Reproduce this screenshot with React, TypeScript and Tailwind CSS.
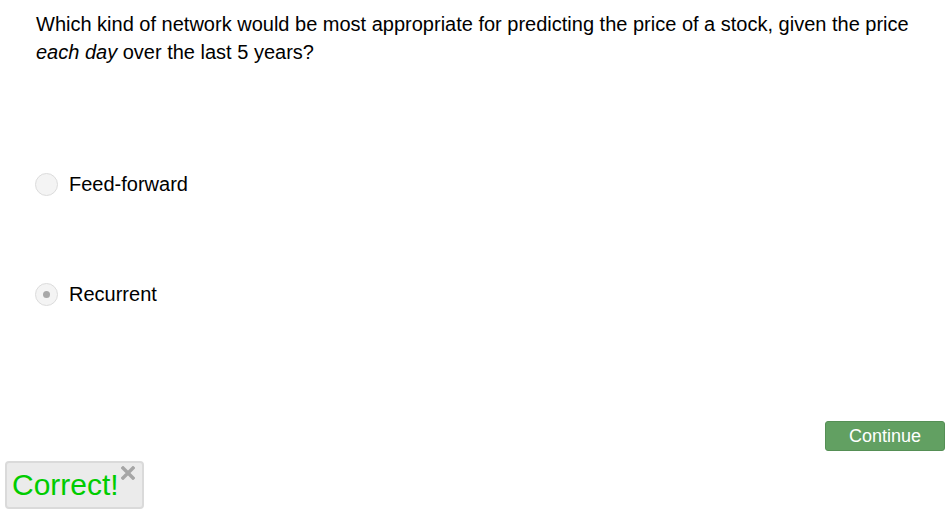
import React, { useState } from 'react';

const options = ['Feed-forward', 'Recurrent'];

export default function App() {
  const [selected, setSelected] = useState('Recurrent');
  const [showResult, setShowResult] = useState(true);

  return (
    <div
      className="relative w-[952px] h-[516px] bg-white text-black overflow-hidden"
      style={{ fontFamily: '"Liberation Sans", Arial, sans-serif' }}
    >
      <div className="pl-[36px] pr-[40px] pt-[10px]">
        <p className="text-[20px] leading-[28px]">
          Which kind of network would be most appropriate for predicting the price of a stock, given the price{' '}
          <em>each day</em> over the last 5 years?
        </p>

        <div className="mt-[107px] flex flex-col gap-[88px]">
          {options.map((opt) => (
            <label key={opt} className="flex items-center gap-[11px] cursor-pointer h-[22px]" onClick={() => setSelected(opt)}>
              <span className="w-[23px] h-[23px] -ml-[1px] rounded-full border border-[#dcdcdc] bg-[#f4f4f4] flex items-center justify-center">
                {selected === opt && <span className="w-[7px] h-[7px] rounded-full bg-[#a8a8a8]" />}
              </span>
              <span className="text-[20px] leading-[22px]">{opt}</span>
            </label>
          ))}
        </div>
      </div>

      <div className="flex justify-end pr-[7px] mt-[116px]">
        <button className="w-[120px] h-[30px] rounded-[3px] bg-[#62a062] border border-[#558f55] text-white text-[18px] leading-[28px]">
          Continue
        </button>
      </div>

      {showResult && (
        <div className="absolute left-[5px] top-[461px] w-[139px] h-[48px] rounded-[4px] bg-[#ebebeb] border-2 border-[#dadada]">
          <span className="absolute left-[5px] top-[3px] text-[30px] leading-[38px] text-[#00cc00]">Correct!</span>
          <button
            className="absolute right-[7px] top-[3px]"
            onClick={() => setShowResult(false)}
          >
            <svg width="14" height="14" viewBox="0 0 14 14">
              <path d="M2 2 L12 12 M12 2 L2 12" stroke="#a6a6a6" strokeWidth="3.4" strokeLinecap="square" />
            </svg>
          </button>
        </div>
      )}
    </div>
  );
}
